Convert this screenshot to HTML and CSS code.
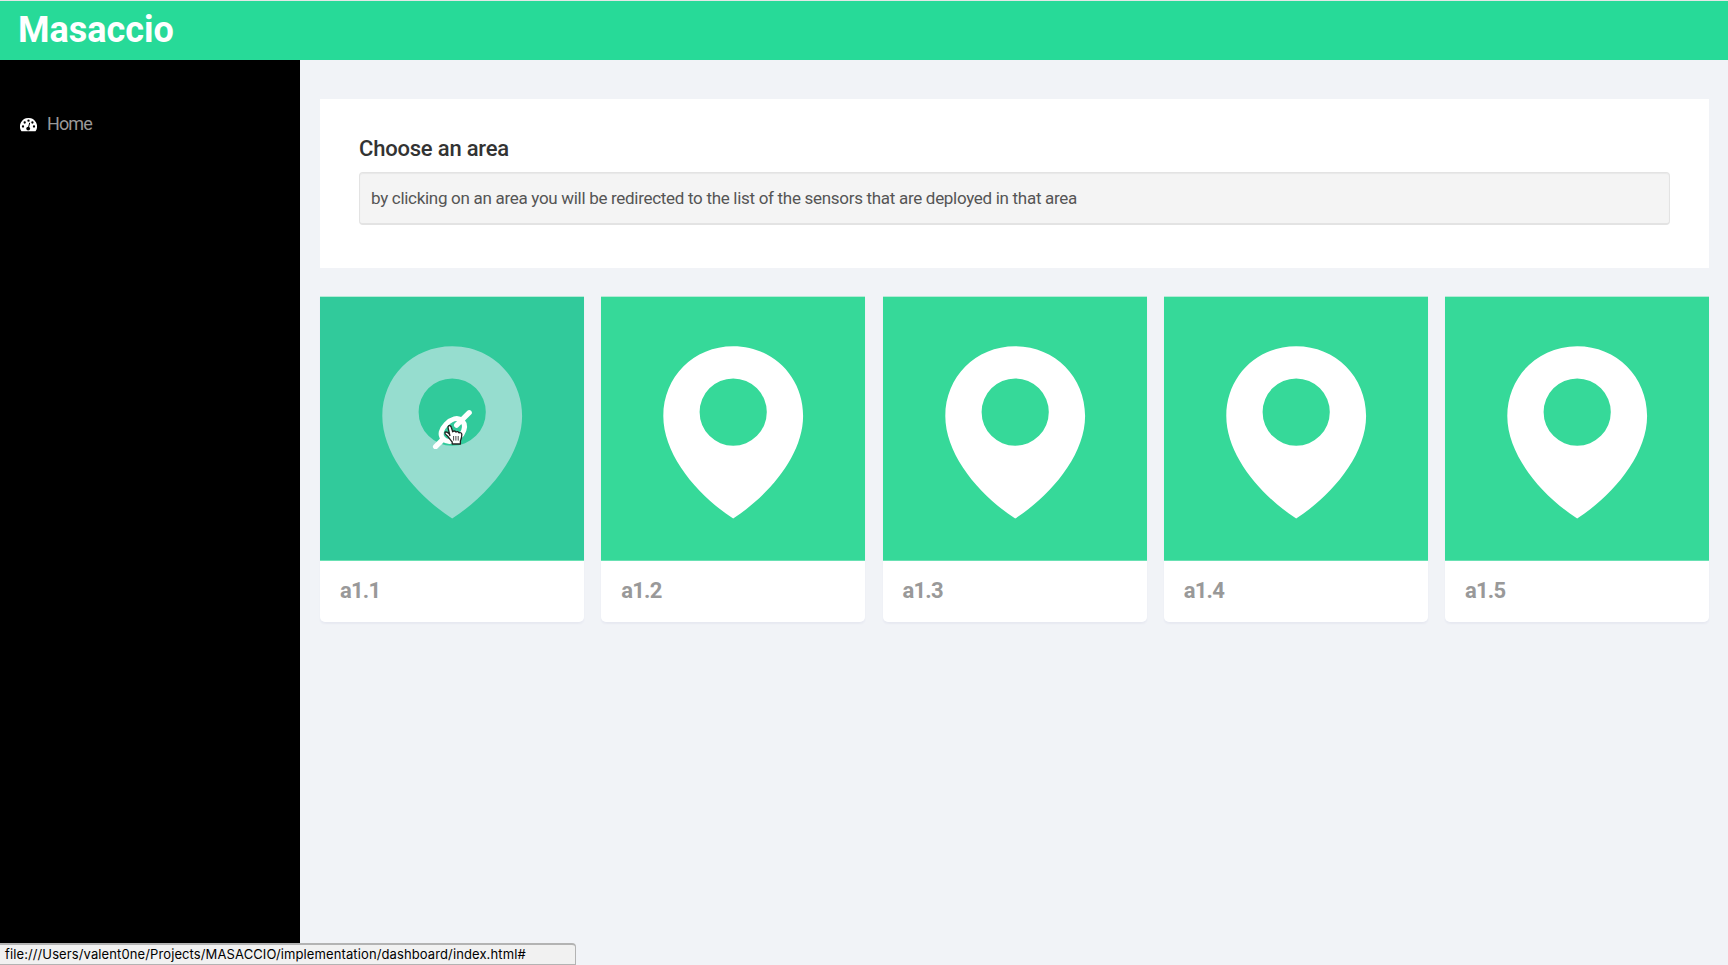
FILE: index.html
```html
<!DOCTYPE html>
<html lang="en">
<head>
<meta charset="utf-8">
<title>Masaccio</title>
<link rel="stylesheet" href="styles.css">
</head>
<body>
<svg class="defs" width="0" height="0" aria-hidden="true">
  <symbol id="pin" viewBox="0 0 264 264">
    <path transform="translate(0 .5)" fill="currentColor" fill-rule="evenodd" d="M132.2 49.7C92.5 49.7 62.3 80.5 62.3 119.5C62.3 159.500 98 200 132.200 222C166.400 200 202.100 159.500 202.100 119.500C202.100 80.500 171.900 49.700 132.200 49.700ZM132.200 82a33.600 33.600 0 1 1 0 67.200a33.600 33.600 0 1 1 0-67.200Z"/>
  </symbol>
</svg>
<header class="topbar"><h1 class="brand">Masaccio</h1></header>
<div class="layout">
  <nav class="sidebar">
    <a class="nav-item" href="#">
      <svg class="nav-icon" viewBox="0 0 17 14">
        <path fill="#fff" d="M8.500 0A8.400 8.400 0 0 0 1.300 12.900Q1.500 13.300 2 13.300H15Q15.500 13.300 15.700 12.900A8.400 8.400 0 0 0 8.500 0Z"/>
        <g fill="#000"><circle cx="3" cy="8.500" r="1.150"/><circle cx="4.700" cy="4.500" r="1.150"/><circle cx="8.500" cy="2.700" r="1.150"/><circle cx="12.400" cy="4.500" r="1.150"/><circle cx="14" cy="8.500" r="1.150"/><circle cx="8.200" cy="10.600" r="1.900"/></g>
        <path stroke="#000" stroke-width="1" stroke-linecap="round" d="M8.300 10.300L9.600 5.200"/>
      </svg>
      <span>Home</span>
    </a>
  </nav>
  <main class="content">
    <section class="panel">
      <h2 class="panel-title">Choose an area</h2>
      <p class="hint">by clicking on an area you will be redirected to the list of the sensors that are deployed in that area</p>
    </section>
    <section class="areas">
      <article class="area area-hover">
        <div class="thumb">
          <svg class="pin"><use href="#pin"/></svg>
          <svg class="overlay-icons" viewBox="0 0 40 40">
            <g fill="none" stroke="#fff" stroke-width="5.200" stroke-linecap="round">
              <path d="M3.600 37.700L11.200 30.100"/>
              <path d="M24.600 16.200L37.200 3.700"/>
              <path stroke-width="5" d="M11.200 30.100C7.500 26 8.800 20.500 14 15.200C19.500 9.700 25.500 7.800 30 11.500C34 16 33 20.500 29.700 25.500C25 31.500 17 35 11.200 30.100"/>
            </g>
          </svg>
          <svg class="pointer" viewBox="0 0 22 22">
            <path fill="#fff" stroke="#222" stroke-width="1.300" stroke-linejoin="round" d="M7 12L5.200 4.300C4.300 1.400 7.500 .5 8.300 3.300L9.700 7.800C10.300 6.600 12.500 6.700 12.900 8.200C13.700 7.200 15.500 7.400 15.900 8.900C17 8.200 18.700 8.700 18.800 10.400C18.900 13.500 18.200 15 17.400 17V20H9.200V18C7.500 16 6.500 14.300 4.900 12.500C3.600 11.200 1.400 10 1.900 8.500C2.600 7.300 4.700 8.300 6.500 10.300"/>
            <path stroke="#333" stroke-width=".9" d="M10.600 12v4.600M12.900 12v4.600M15.200 12v4.600"/>
          </svg>
        </div>
        <h3 class="area-name">a1.1</h3>
      </article>
      <article class="area"><div class="thumb"><svg class="pin"><use href="#pin"/></svg></div><h3 class="area-name">a1.2</h3></article>
      <article class="area"><div class="thumb"><svg class="pin"><use href="#pin"/></svg></div><h3 class="area-name">a1.3</h3></article>
      <article class="area"><div class="thumb"><svg class="pin"><use href="#pin"/></svg></div><h3 class="area-name">a1.4</h3></article>
      <article class="area"><div class="thumb"><svg class="pin"><use href="#pin"/></svg></div><h3 class="area-name">a1.5</h3></article>
    </section>
  </main>
</div>
<div class="status">file:///Users/valent0ne/Projects/MASACCIO/implementation/dashboard/index.html#</div>
</body>
</html>
```
FILE: styles.css
```css
* { box-sizing: border-box; }
body {
  margin: 0;
  height: 965px;
  overflow: hidden;
  display: flex;
  flex-direction: column;
  background: #f1f3f7;
  font-family: Roboto, sans-serif;
}
h1, h2, h3, p { margin: 0; }
.defs { position: absolute; }
.topbar {
  flex: 0 0 60px;
  border-top: 1px solid #e3e7e6;
  background: #27da98;
  padding: 8px 18px 0;
}
.brand {
  color: #fff;
  font-size: 36px;
  line-height: 42px;
  font-weight: 700;
}
.layout { flex: 1; display: flex; }
.sidebar {
  flex: 0 0 300px;
  background: #000;
  padding: 52px 20px;
}
.nav-item {
  display: flex;
  align-items: center;
  gap: 10px;
  height: 24px;
  color: #999;
  font-size: 18px;
  line-height: 22px;
  letter-spacing: -0.9px;
  text-decoration: none;
}
.nav-icon { width: 17px; height: 14px; margin-top: 2px; }
.content {
  flex: 1;
  padding: 39px 19px 0 20px;
}
.panel {
  height: 169px;
  padding: 37px 39px 0;
  background: #fff;
}
.panel-title {
  color: #333;
  font-size: 22px;
  line-height: 26px;
  font-weight: 500;
  letter-spacing: -0.2px;
}
.hint {
  height: 53px;
  margin-top: 10px;
  padding: 0 11px;
  border: 1px solid #e3e3e3;
  border-bottom-width: 2px;
  border-radius: 4px;
  background: #f4f4f4;
  box-shadow: inset 0 1px 1px rgba(0, 0, 0, .05);
  color: #555;
  font-size: 17px;
  line-height: 50px;
  letter-spacing: -0.3px;
  white-space: nowrap;
}
.areas {
  display: flex;
  justify-content: space-between;
  margin-top: 28px;
}
.area {
  width: 264px;
  height: 326px;
  background: #fff;
  border-radius: 0 0 5px 5px;
  box-shadow: 0 2px 2px rgba(90, 90, 160, .06);
}
.thumb {
  position: relative;
  height: 265px;
  background: #36d999;
  border-top: 1px solid #b5ebd5;
  border-bottom: 1px solid #68e1b3;
  color: #fff;
}
.area-hover .thumb {
  background: #31ca9b;
  color: #96ddcf;
}
.pin { display: block; width: 264px; height: 264px; margin-top: -1px; }
.overlay-icons { position: absolute; left: 112px; top: 112px; width: 40px; height: 40px; }
.pointer { position: absolute; left: 123px; top: 127px; width: 22px; height: 22px; }
.area-name {
  padding: 17px 20px 0;
  color: #999;
  font-size: 22px;
  line-height: 26px;
  font-weight: 700;
  letter-spacing: -0.8px;
}
.status {
  position: absolute;
  left: 0;
  bottom: 0;
  width: 576px;
  height: 22px;
  padding-left: 5px;
  border: 1px solid #b3b3b3;
  border-top-width: 2px;
  border-left: 0;
  border-radius: 0 4px 0 0;
  background: #f1f1f1;
  color: #000;
  font: 13px/19px Inter, sans-serif;
  letter-spacing: 0.11px;
  white-space: nowrap;
}
```
